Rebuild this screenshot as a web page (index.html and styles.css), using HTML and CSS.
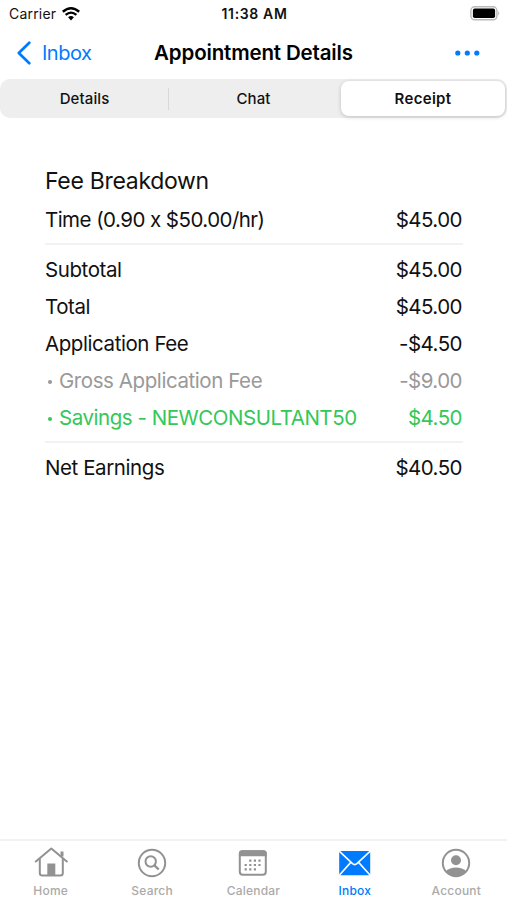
FILE: index.html
```
<!DOCTYPE html>
<html lang="en">
<head>
    <meta charset="utf-8">
    <title>Appointment Details</title>
    <link rel="stylesheet" href="styles.css">
</head>
<body>
    <div class="status">
        <div class="carrier">
            <span>Carrier</span>
            <svg width="18" height="14" viewBox="0 0 18 14">
                <path d="M0.8 4.8 Q9 -2.2 17.2 4.8" fill="none" stroke="#000" stroke-width="2.5"/>
                <path d="M3.6 7.9 Q9 3.3 14.4 7.9" fill="none" stroke="#000" stroke-width="2.3"/>
                <path d="M6.1 10.3 Q9 7.8 11.9 10.3 L9 13.4 Z"/>
            </svg>
        </div>
        <span class="clock">11:38 AM</span>
        <svg class="battery" width="30" height="15" viewBox="0 0 30 15">
            <rect x="0.9" y="0.8" width="26" height="13" rx="3.8" fill="#fff" stroke="#b9b9b9" stroke-width="1.4"/>
            <rect x="2.9" y="2.6" width="22.2" height="9.4" rx="1.8"/>
            <path d="M28.2 5 Q30.2 7.3 28.2 9.6 Z" fill="#b9b9b9"/>
        </svg>
    </div>
    <div class="nav">
        <a class="back">
            <svg width="14" height="24" viewBox="0 0 14 24">
                <path d="M12.3 1.7 L1.8 12 L12.3 22.3" fill="none" stroke="#007aff" stroke-width="2.7" stroke-linecap="round" stroke-linejoin="round"/>
            </svg>
            <span>Inbox</span>
        </a>
        <h1>Appointment Details</h1>
        <svg class="more" width="25" height="6" viewBox="0 0 25 6" fill="#007aff">
            <circle cx="2.8" cy="3" r="2.6"/>
            <circle cx="12.3" cy="3" r="2.6"/>
            <circle cx="21.8" cy="3" r="2.6"/>
        </svg>
    </div>
    <div class="segments">
        <div class="segment first">Details</div>
        <div class="segment">Chat</div>
        <div class="segment selected">Receipt</div>
    </div>

    <div class="receipt">
        <h2>Fee Breakdown</h2>
        <div class="row"><span class="time">Time (0.90 x $50.00/hr)</span><span class="price">$45.00</span></div>
        <hr>
        <div class="row"><span>Subtotal</span><span class="price">$45.00</span></div>
        <div class="row"><span>Total</span><span class="price">$45.00</span></div>
        <div class="row"><span>Application Fee</span><span class="price">-$4.50</span></div>
        <div class="row gross"><span><i></i>Gross Application Fee</span><span class="price">-$9.00</span></div>
        <div class="row savings"><span><i></i>Savings - NEWCONSULTANT50</span><span class="price">$4.50</span></div>
        <hr>
        <div class="row"><span>Net Earnings</span><span class="price">$40.50</span></div>
    </div>

    <div class="tabs">
        <div class="tab">
            <svg width="34" height="32" viewBox="0 0 34 32" fill="none" stroke="#929292" stroke-width="2" stroke-linecap="round" stroke-linejoin="round">
                <path d="M1.8 15.5 L17.3 2.5 L32.8 15.5"/>
                <path d="M5.8 13 V27 Q5.8 29.5 8.3 29.5 H26.3 Q28.8 29.5 28.8 27 V13"/>
                <path d="M28 10.5 V5.5" stroke-width="3" stroke-linecap="butt"/>
                <path d="M13.3 17.5 H21.3 V29 H13.3 Z" fill="#929292" stroke="none"/>
            </svg>
            <span>Home</span>
        </div>
        <div class="tab">
            <svg width="34" height="32" viewBox="0 0 34 32" fill="none" stroke="#929292">
                <circle cx="17" cy="17" r="13.2" stroke-width="2"/>
                <circle cx="15.7" cy="15.5" r="5.2" stroke-width="2"/>
                <path d="M19.4 19.3 L23.7 23.5" stroke-width="2.4"/>
            </svg>
            <span>Search</span>
        </div>
        <div class="tab">
            <svg width="34" height="32" viewBox="0 0 34 32">
                <rect x="3.8" y="5.3" width="26" height="23.5" rx="3" fill="#fff" stroke="#929292" stroke-width="2"/>
                <path d="M2.9 10.2 V7.5 Q2.9 4.3 6.1 4.3 H27.6 Q30.8 4.3 30.8 7.5 V10.2 Z" fill="#929292"/>
                <g stroke="#929292" stroke-width="2.2" stroke-dasharray="2.2 2.4">
                    <path d="M13.2 14.6 H25.3"/>
                    <path d="M8.6 19 H25.3"/>
                    <path d="M8.6 23.4 H20.3"/>
                </g>
            </svg>
            <span>Calendar</span>
        </div>
        <div class="tab active">
            <svg width="34" height="32" viewBox="0 0 34 32">
                <rect x="1.2" y="5" width="31" height="24.3" rx="1.6" fill="#007aff"/>
                <path d="M1.5 5.3 L14.5 17.7 Q16.7 19.5 18.9 17.7 L32 5.3 M1.5 29 L12.8 16.4 M32 29 L20.6 16.4" fill="none" stroke="#fff" stroke-width="1.6"/>
            </svg>
            <span>Inbox</span>
        </div>
        <div class="tab">
            <svg width="34" height="32" viewBox="0 0 34 32">
                <circle cx="17" cy="17" r="13.2" fill="#fff" stroke="#929292" stroke-width="2"/>
                <circle cx="17" cy="14.2" r="5" fill="#929292"/>
                <path d="M7 25 Q10.5 21.5 17 21.5 Q23.5 21.5 27 25 Q23 30 17 30 Q11 30 7 25 Z" fill="#929292"/>
            </svg>
            <span>Account</span>
        </div>
    </div>
</body>
</html>
```
FILE: styles.css
```
*{
    box-sizing: border-box;
}
body{
    margin: 0;
    height: 900px;
    display: flex;
    flex-direction: column;
    background-color: white;
    color: #111;
    font-family: Inter, "Liberation Sans", sans-serif;
    overflow: hidden;
}
svg{
    display: block;
    flex: none;
}
.status, .nav{
    display: grid;
    grid-template-columns: 1fr auto 1fr;
    align-items: center;
}
.status{
    height: 27px;
    padding: 0 7px 0 9px;
    font-size: 14px;
}
.carrier{
    display: flex;
    align-items: center;
    gap: 6px;
    letter-spacing: 0.2px;
}
.clock{
    font-weight: 600;
    letter-spacing: 0.65px;
}
.battery, .more{
    justify-self: end;
}
.nav{
    height: 52px;
    padding: 0 17px 1px;
}
.more{
    margin-right: 10px;
}
.back{
    display: flex;
    align-items: center;
    gap: 11px;
    color: #007aff;
    font-size: 20px;
    letter-spacing: -0.5px;
}
h1{
    margin: 0;
    font-size: 20.5px;
    font-weight: 600;
    color: black;
    letter-spacing: -0.15px;
}
.segments{
    display: grid;
    grid-template-columns: 1fr 1fr 1fr;
    height: 39px;
    border-radius: 10px;
    background-color: #eee;
}
.segment{
    display: flex;
    align-items: center;
    justify-content: center;
    font-size: 15px;
    font-weight: 500;
    letter-spacing: 0.1px;
}
.first{
    background: linear-gradient(#d8d8d8, #d8d8d8) right center / 1px 22px no-repeat;
}
.selected{
    margin: 2px 2px 2px 3px;
    background-color: white;
    border-radius: 8px;
    font-weight: 600;
    letter-spacing: 0.3px;
    box-shadow: 0 1px 4px rgba(0,0,0,0.2);
}
.receipt{
    flex: 1;
    padding: 45px 44px 0 45px;
    font-size: 20.5px;
    letter-spacing: -0.42px;
}
h2{
    margin: 0;
    height: 38px;
    line-height: 37px;
    font-size: 23px;
    font-weight: 400;
    letter-spacing: -0.3px;
}
.row{
    display: flex;
    justify-content: space-between;
    height: 37px;
    line-height: 37px;
}
.time, .price{
    letter-spacing: -0.54px;
}
.price{
    margin-right: 1px;
}
.savings span:first-child{
    letter-spacing: -0.46px;
}
hr{
    margin: 5px 0 6px;
    height: 2px;
    border: 0;
    background-color: #f2f2f2;
}
i{
    display: inline-block;
    width: 4px;
    height: 4px;
    margin: 0 7px 4px 3px;
    border-radius: 50%;
    background-color: currentColor;
}
.gross{
    color: #999;
}
.savings{
    color: #34c759;
}
.tabs{
    display: grid;
    grid-template-columns: repeat(5, 1fr);
    height: 61px;
    border-top: 2px solid #f2f2f2;
}
.tab{
    display: flex;
    flex-direction: column;
    align-items: center;
    padding-top: 5px;
    gap: 5px;
    color: #aaa;
    font-size: 12px;
    font-weight: 500;
    letter-spacing: 0.2px;
}
.active{
    color: #007aff;
}
```
